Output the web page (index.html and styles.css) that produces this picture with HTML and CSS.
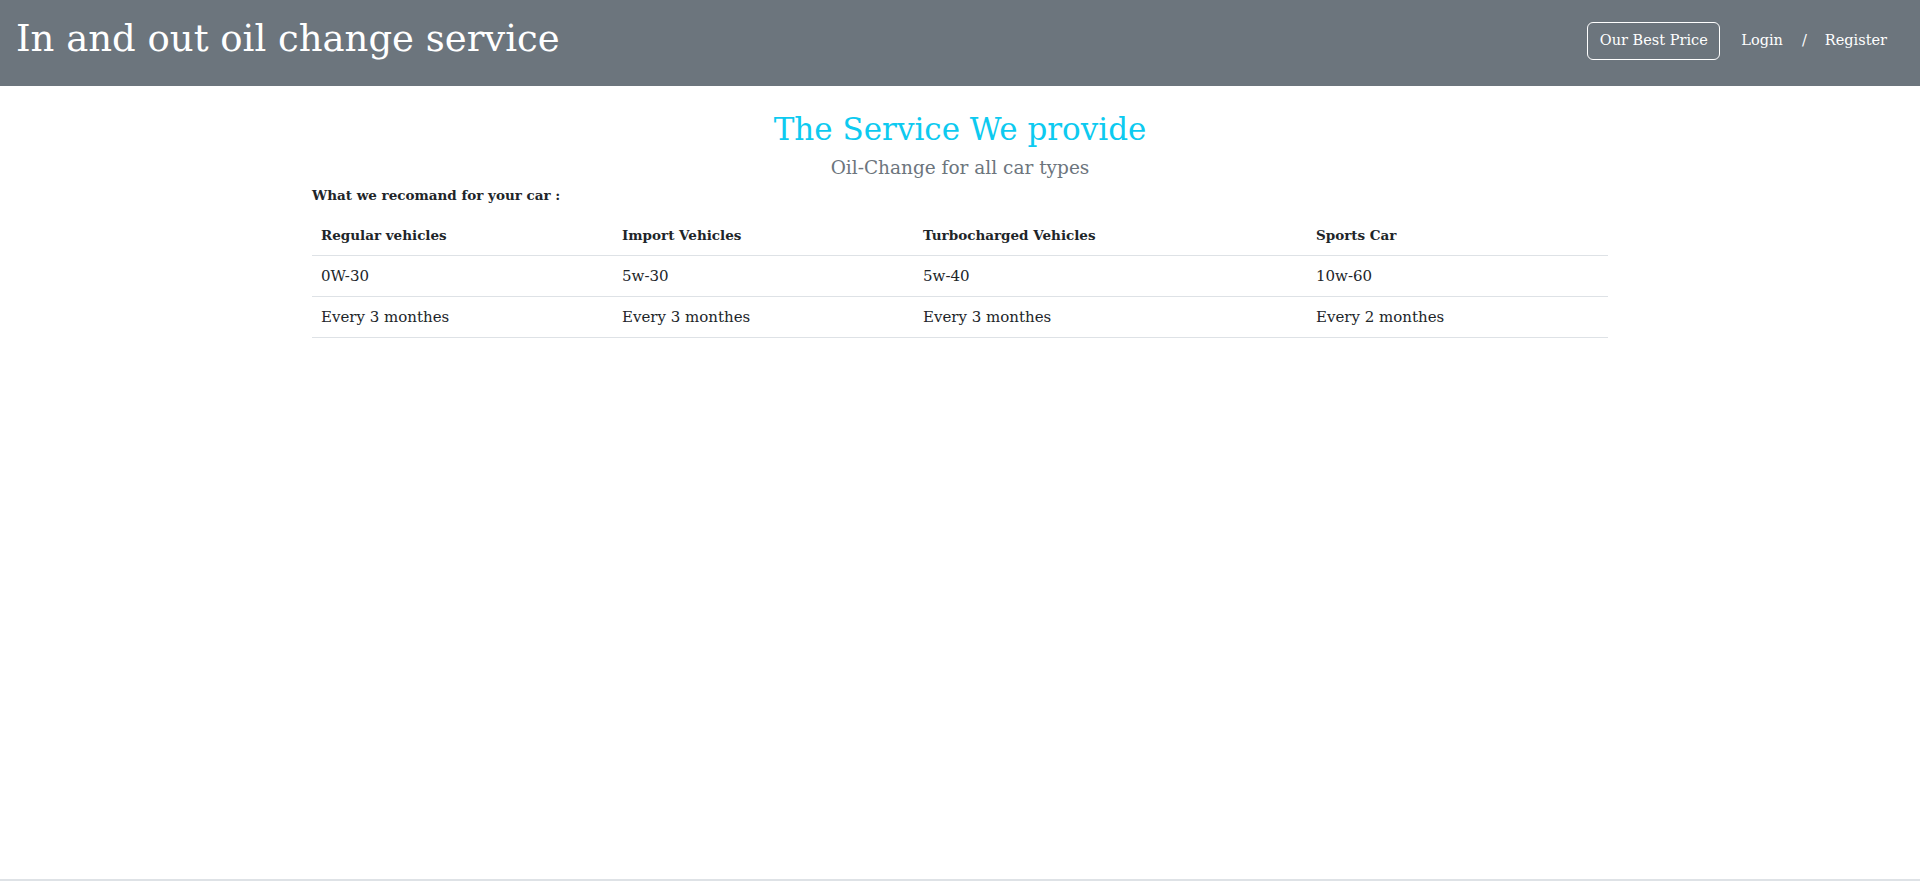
FILE: index.html
```html
<!DOCTYPE html>
<html lang="en">
<head>
<meta charset="utf-8">
<title>In and out oil change service</title>
<link rel="stylesheet" href="styles.css">
</head>
<body>
<nav class="navbar">
  <div class="brand">In and out oil change service</div>
  <div class="nav-right">
    <a class="btn-outline" href="#">Our Best Price</a>
    <a class="nav-link" href="#">Login</a>
    <span class="sep">/</span>
    <a class="nav-link" href="#">Register</a>
  </div>
</nav>
<main class="container">
  <h1 class="title">The Service We provide</h1>
  <p class="subtitle">Oil-Change for all car types</p>
  <p class="lead-label">What we recomand for your car :</p>
  <table class="table">
    <colgroup>
      <col class="c1"><col class="c2"><col class="c3"><col class="c4">
    </colgroup>
    <thead>
      <tr><th>Regular vehicles</th><th>Import Vehicles</th><th>Turbocharged Vehicles</th><th>Sports Car</th></tr>
    </thead>
    <tbody>
      <tr><td>0W-30</td><td>5w-30</td><td>5w-40</td><td>10w-60</td></tr>
      <tr><td>Every 3 monthes</td><td>Every 3 monthes</td><td>Every 3 monthes</td><td>Every 2 monthes</td></tr>
    </tbody>
  </table>
</main>
<footer class="footer"></footer>
</body>
</html>
```
FILE: styles.css
```css
* { box-sizing: border-box; }
html, body { margin: 0; padding: 0; height: 100%; }
body {
  font-family: "DejaVu Serif", "Liberation Serif", serif;
  font-size: 15px;
  line-height: 1.5;
  color: #212529;
  background: #fff;
  display: flex;
  flex-direction: column;
}
.navbar {
  height: 86px;
  background: #6c757d;
  display: flex;
  align-items: center;
  justify-content: space-between;
  padding: 0 33px 0 16px;
  flex-shrink: 0;
}
.brand {
  color: #fff;
  font-size: 37px;
  line-height: 1.2;
  margin-top: -7px;
}
.nav-right {
  display: flex;
  align-items: center;
  margin-top: -4px;
}
.btn-outline {
  color: #fff;
  text-decoration: none;
  border: 1px solid #fff;
  border-radius: 6px;
  height: 38px;
  width: 133px;
  display: flex;
  align-items: center;
  justify-content: center;
  font-size: 14.5px;
}
.nav-link {
  color: #fff;
  text-decoration: none;
  font-size: 14.5px;
}
.btn-outline + .nav-link { margin-left: 21px; }
.sep {
  color: #fff;
  font-size: 14.5px;
  margin: 0 18px 0 19px;
}
.container {
  width: 1296px;
  margin: 0 auto;
  flex: 1;
}
.title {
  margin: 25px 0 0;
  text-align: center;
  color: #0dcaf0;
  font-weight: normal;
  font-size: 31px;
  line-height: 1.2;
}
.subtitle {
  margin: 8px 0 0;
  text-align: center;
  color: #6c757d;
  font-size: 18.5px;
  line-height: 1.3;
}
.lead-label {
  margin: 3px 0 0;
  font-size: 13.5px;
  font-weight: bold;
  line-height: 24px;
}
.table {
  width: 100%;
  border-collapse: collapse;
  margin-top: 8px;
  table-layout: fixed;
}
.c1 { width: 301px; }
.c2 { width: 301px; }
.c3 { width: 393px; }
.c4 { width: 301px; }
.table th, .table td {
  text-align: left;
  padding: 8px 9px;
  line-height: 24px;
  border-bottom: 1px solid #dee2e6;
  font-size: 15px;
}
.table th { font-weight: bold; font-size: 13.5px; }
.footer {
  flex-shrink: 0;
  height: 2px;
  border-top: 2px solid #dee2e6;
}
```
